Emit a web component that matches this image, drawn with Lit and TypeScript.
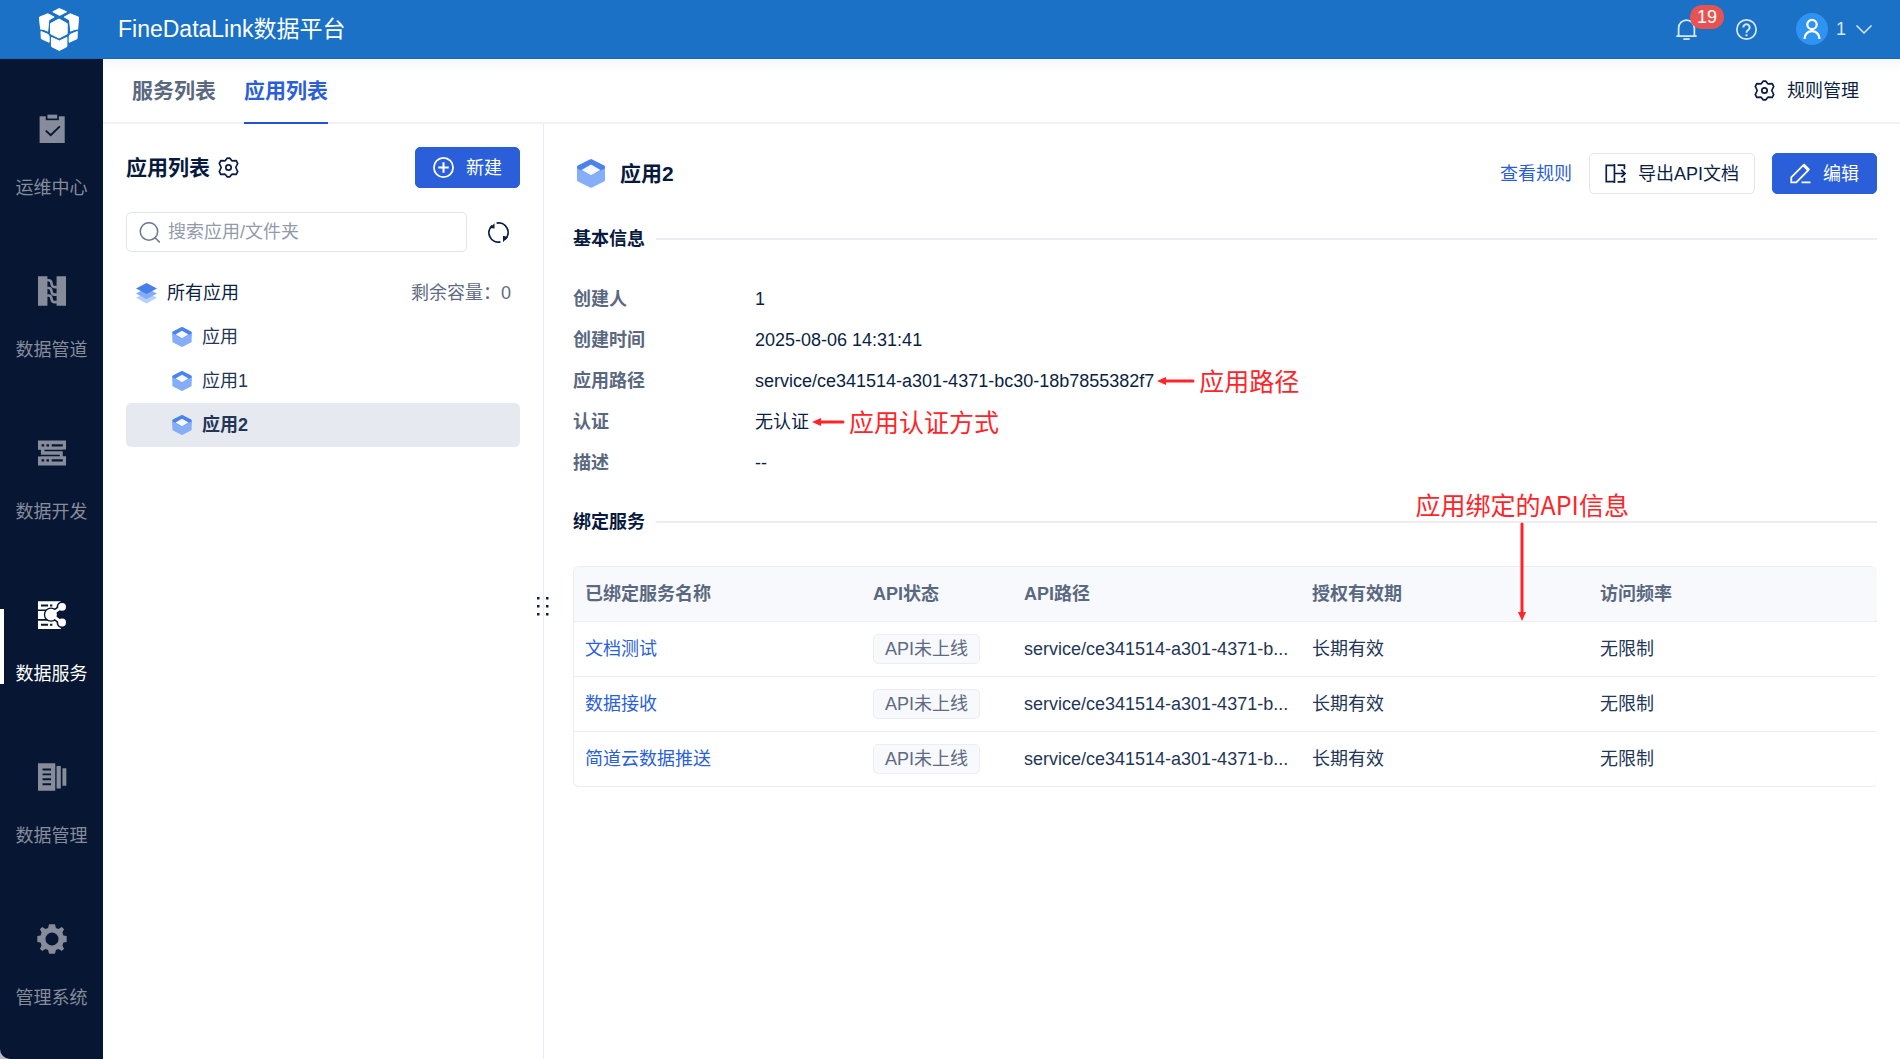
import { LitElement, html, css, svg } from "lit";
import { customElement, state } from "lit/decorators.js";
import { classMap } from "lit/directives/class-map.js";

const NAVY = "#071633";

const navIcons = {
  ops: svg`<svg class="nav-icon" viewBox="108 343 92 92"><path d="M116 350h77v82h-77z"/><path d="M135 340h40v22h-40z" fill=${NAVY}/><path d="M140 345h30v12h-30z"/><path d="M135 394l15 14 28-27" fill="none" stroke=${NAVY} stroke-width="6"/></svg>`,
  pipe: svg`<svg class="nav-icon" viewBox="108 169 92 92"><path d="M111 170h29v90h-29zM168 170h29v90h-29z"/><g fill="none" stroke="currentColor" stroke-width="8"><path d="M139 182h5c8 0 8 6 9 12s3 9 9 9h7"/><path d="M139 206h5c8 0 8 6 9 12s3 8 9 8h7"/><path d="M139 229h5c8 0 8 6 9 12s3 8 9 8h7"/></g></svg>`,
  dev: svg`<svg class="nav-icon" viewBox="108 653 92 92"><path d="M111 661h86v28h-86zM111 709h86v28h-86zM120 686h67v26h-67z"/><g fill=${NAVY}><path d="M131 689h66v5h-66zM111 704h67v5h-67z"/><path d="M122 672h8v7h-8zM137 672h8v7h-8zM153 672h34v7h-34zM122 718h8v7h-8zM137 718h8v7h-8zM153 718h34v7h-34z"/></g></svg>`,
  service: svg`<svg class="nav-icon" viewBox="108 59 92 92"><path d="M111 63h70v25h-70zM111 93h26v24h-26zM111 123h70v25h-70z"/><path fill=${NAVY} d="M120 73h22v6h-22zM148 73h7v6h-7zM120 132h22v6h-22zM148 132h7v6h-7z"/><g fill=${NAVY} stroke=${NAVY} stroke-width="10"><circle cx="151" cy="104" r="17"/><circle cx="185" cy="80" r="12"/><circle cx="185" cy="128" r="12"/><path d="M151 104l34-24M151 104l34 24" stroke-width="18"/></g><circle cx="151" cy="104" r="18"/><circle cx="185" cy="80" r="12"/><circle cx="185" cy="128" r="12"/><path d="M151 104l34-24M151 104l34 24" stroke="currentColor" stroke-width="9"/></svg>`,
  manage: svg`<svg class="nav-icon" viewBox="108 543 92 92"><path d="M111 547h53v84h-53zM168 555h13v69h-13zM186 562h12v54h-12z"/><path d="M125 566h26M125 581h26M125 596h26M125 611h26" stroke=${NAVY} stroke-width="6"/></svg>`,
  system: svg`<svg class="nav-icon" viewBox="-46 -46 92 92"><path fill-rule="evenodd" d="M-9-45H9L12-34 20-31 30-37 37-30 32-20 35-11 45-9V9L35 11 32 20 37 30 30 37 20 31 12 34 9 45H-9L-12 34-20 31-30 37-37 30-32 20-35 11-45 9V-9L-35-11-32-20-37-30-30-37-20-31-12-34ZM0-20A20 20 0 1 0 0 20 20 20 0 1 0 0-20Z"/></svg>`,
};

const logo = svg`<svg class="logo" viewBox="113 20 128 136" fill="#fff" stroke="#fff" stroke-width="3" stroke-linejoin="round"><path d="M158 34l20-10 22 10-21 11z"/><path d="M118 50l25-10 19 10-16 9-3 27-22 1z"/><path d="M236 50l-25-10-18 10 16 9 3 27 22 1z"/><path d="M118 51l3 33 22 9V62z"/><path d="M236 51l-3 33-21 9V62z"/><path d="M122 94l22 9 3 6v18l-24-11z"/><path d="M233 94l-22 9-3 6v18l24-11z"/><path d="M177 56l25 14v31l-25 13-26-13V70z"/><path d="M154 112l24 11 23-11v28l-23 12-24-12z"/></svg>`;

const gear = svg`<svg class="icon" viewBox="0.300 0.200 19.400 19.600" fill="none" stroke="currentColor" stroke-width="1.600" stroke-linejoin="round"><path d="M8.900 1.200h2.200L13.400 3.900l3.700-.4 1.500 2.700L16.800 10l1.800 3.800-1.500 2.700-3.700-.4-2.300 2.700H8.900L6.600 16.100l-3.700.4-1.500-2.700L3.200 10 1.400 6.200l1.500-2.700 3.700.4z"/><circle cx="10" cy="10" r="2.500"/></svg>`;
const plus = svg`<svg class="icon" viewBox="0 0 20 20" fill="none" stroke="currentColor" stroke-width="1.700"><circle cx="10" cy="10" r="9.100"/><path d="M10 5v10M5 10h10" stroke-width="2"/></svg>`;
const search = svg`<svg class="icon" viewBox="0 0 20 20" fill="none" stroke="currentColor" stroke-width="1.500"><circle cx="9.500" cy="9" r="8.300"/><path d="M15.300 15l4.500 4.500"/></svg>`;
const refresh = svg`<svg class="icon" viewBox="0 0 20 20" fill="none" stroke="currentColor" stroke-width="1.700"><path d="M11.800 18.900A9 9 0 0 1 4 3.300"/><path d="M8.200 1.100A9 9 0 0 1 16 16.700"/><path d="M1.800 5.800L6.200 1.200v5zM14.300 13v6.200l4.500-5z" fill="currentColor" stroke="none"/></svg>`;
const layers = svg`<svg class="icon" viewBox="0 0 20 20"><path d="M10 9l10 5-10 5.500L0 14z" fill="#b7d0fb"/><path d="M10 5l10 5-10 5.500L0 10z" fill="#85adf7"/><path d="M10 0l10 5.200-10 5.300L0 5.200z" fill="#4880ea"/></svg>`;
const cube = svg`<svg class="cube" viewBox="0 0 28 29"><path d="M1 6.500L13 .4q1-.5 2 0l12 6.100q1 .5 1 1.500v13q0 1-1 1.500L15 28.600q-1 .5-2 0L1 22.500q-1-.5-1-1.500V8q0-1 1-1.500z" fill="#86adf7"/><path d="M1 6.500L13 .4q1-.5 2 0l12 6.100q1 .5 1 1.500v1.500l-14 7-14-7V8q0-1 1-1.500z" fill="#4b82ec"/><path d="M0 9.500l14 7 14-7V14H0z" fill="#86adf7"/><path d="M4.500 11L14 5.600 23.500 11 14 16.300z" fill="#f5f9ff"/></svg>`;
const exportIcon = svg`<svg class="icon" viewBox="0 0 20 20" fill="none" stroke="currentColor" stroke-width="1.600"><path d="M9 2.200H1.200v15.600H9zM9 1v18"/><path d="M12 2h6.500v4M12 18h6.500v-4M9 10h9.500M15.500 6.500L19 10l-3.500 3.500"/></svg>`;
const pencil = svg`<svg class="icon" viewBox="0 0 20 20" fill="none" stroke="currentColor" stroke-width="1.700"><path d="M1.200 18.500v-4.800L12.500 2.300l4.700 4.800L6 18.500zM13 1l5.500 5.500M11 18.500h8.500"/></svg>`;
const bell = svg`<svg class="icon" viewBox="0 0 20 20" fill="none" stroke="currentColor" stroke-width="1.700"><path d="M.3 16.300h19.400M2.500 16V8.500a7.500 7.500 0 0 1 15 0V16"/><path d="M7 19.100h6"/></svg>`;
const help = svg`<svg class="icon" viewBox="0 0 20 20" fill="none" stroke="currentColor" stroke-width="1.600"><circle cx="10" cy="10" r="9.200"/><path d="M7 8a3 3 0 1 1 4.600 2.500Q10 11.500 10 13M10 14.500v2" stroke-width="1.900"/></svg>`;
const avatar = svg`<svg class="avatar" viewBox="0 0 32 32" fill="none" stroke="#fff" stroke-width="2.200"><circle cx="16" cy="16" r="16" fill="#2f93f3" stroke="none"/><circle cx="16" cy="11.500" r="4.700"/><path d="M8.500 26c0-10.500 15-10.500 15 0"/></svg>`;
const chevron = svg`<svg class="chevron" viewBox="0 0 16 9" fill="none" stroke="currentColor" stroke-width="1.500"><path d="M.5.5L8 8l7.500-7.500"/></svg>`;
const grip = svg`<svg viewBox="0 0 12 20" fill="currentColor"><path d="M0 0h2.500v2.500H0zM9 0h2.500v2.500H9zM0 8h2.500v2.500H0zM9 8h2.500v2.500H9zM0 16h2.500v2.500H0zM9 16h2.500v2.500H9z"/></svg>`;

const nav: { key: keyof typeof navIcons; label: string }[] = [
  { key: "ops", label: "运维中心" },
  { key: "pipe", label: "数据管道" },
  { key: "dev", label: "数据开发" },
  { key: "service", label: "数据服务" },
  { key: "manage", label: "数据管理" },
  { key: "system", label: "管理系统" },
];

const leftArrow = (length: number) =>
  svg`<svg class="arrow" width=${length} height="10" viewBox="0 0 ${length} 10"><path d="M0 5L9 1v8z" fill="#ff2429"/><path d="M8 5H${length - 2}" stroke="#ff2429" stroke-width="3" stroke-linecap="round"/></svg>`;

const services = ["文档测试", "数据接收", "简道云数据推送"];
const servicePath = "service/ce341514-a301-4371-bc30-18b7855382f7";
const shortPath = `${servicePath.slice(0, 28)}...`;

@customElement("app-root")
export class AppRoot extends LitElement {
  @state() private selected = "应用2";

  static styles = css`
    :host {
      display: flex;
      flex-direction: column;
      min-height: 100vh;
      background: #fff;
      color: #0b1f43;
      font: 18px/24px "Liberation Sans", "Noto Sans CJK SC", sans-serif;
    }
    * { box-sizing: border-box; }
    button, input { font: inherit; }
    button { border: 0; background: none; padding: 0; color: inherit; cursor: pointer; }
    a { color: #2b5fd9; text-decoration: none; }
    h1, h2, h3, dl, dd { margin: 0; padding: 0; font-size: 21px; }
    svg { display: block; flex: none; }
    .icon { width: 21px; height: 21px; }

    .topbar {
      display: flex;
      align-items: center;
      height: 59px;
      padding: 0 28px 0 38px;
      background: #1a71c6;
      border-bottom: 1px solid #1667b9;
      color: #fff;
    }
    .logo { width: 42px; height: 45px; }
    .product { margin-left: 38px; font-size: 23px; line-height: 32px; font-weight: 400; }
    .account { display: flex; align-items: center; margin-left: auto; color: #d9e8f7; }
    .bell { position: relative; margin-right: 39px; }
    .help { margin-right: 39px; }
    .badge {
      position: absolute;
      left: 14px;
      top: -14px;
      min-width: 34px;
      border-radius: 12px;
      background: #e75252;
      color: #fff;
      text-align: center;
    }
    .user { display: flex; align-items: center; gap: 8px; }
    .avatar { width: 32px; height: 32px; }
    .chevron { width: 16px; height: 9px; margin-left: 2px; }

    .body { display: flex; flex: 1; background: #b9bcc4; }
    .sidebar {
      display: flex;
      flex-direction: column;
      width: 103px;
      flex: none;
      padding-top: 21px;
      background: #071633;
      border-bottom-left-radius: 10px;
    }
    .nav-item {
      position: relative;
      display: flex;
      flex-direction: column;
      align-items: center;
      gap: 32px;
      height: 162px;
      padding-top: 34px;
      color: #868c9a;
    }
    .nav-item.active { color: #fff; }
    .nav-item.active::before {
      content: "";
      position: absolute;
      left: 0;
      top: 43px;
      width: 4px;
      height: 75px;
      background: #fff;
    }
    .nav-icon { width: 30px; height: 30px; fill: currentColor; }

    .page { display: flex; flex-direction: column; flex: 1; min-width: 0; background: #fff; }
    .tabs {
      display: flex;
      gap: 28px;
      height: 65px;
      padding: 0 41px 0 29px;
      border-bottom: 2px solid #f1f2f5;
      background: linear-gradient(#f6f7f9, #fff 14px);
    }
    .tab {
      height: 65px;
      border-bottom: 2px solid transparent;
      color: #5a6880;
      font-size: 21px;
      font-weight: 700;
    }
    .tab.active { color: #2b5fd9; border-color: #2153d4; }
    .rules { display: flex; align-items: center; gap: 12px; margin-left: auto; }

    .split { display: flex; flex: 1; }
    .list {
      position: relative;
      width: 441px;
      flex: none;
      padding: 23px 23px 0 23px;
      border-right: 1px solid #e9ebf0;
    }
    .list-head { display: flex; align-items: center; gap: 8px; }
    .list-head h2, .title { color: #071a3d; }
    .btn {
      display: flex;
      align-items: center;
      justify-content: center;
      gap: 12px;
      height: 41px;
      padding: 0 15px;
      border: 1px solid #e3e6ee;
      border-radius: 5px;
    }
    .btn.primary { padding: 0 17px; background: #2b5fd9; border-color: #2b5fd9; color: #fff; }
    .push { margin-left: auto; }
    .search-row { display: flex; align-items: center; gap: 21px; margin-top: 24px; padding-right: 11px; }
    .search {
      display: flex;
      align-items: center;
      gap: 8px;
      flex: 1;
      min-width: 0;
      height: 40px;
      padding: 0 12px;
      border: 1px solid #e0e4ec;
      border-radius: 5px;
      color: #6f7b90;
    }
    .search input { flex: 1; min-width: 0; border: 0; outline: 0; padding: 0; background: none; color: #0b1f43; }
    .search input::placeholder { color: #929bab; opacity: 1; }
    .tree { margin-top: 19px; }
    .node {
      display: flex;
      align-items: center;
      gap: 10px;
      width: 100%;
      height: 44px;
      padding: 0 9px 0 10px;
      border-radius: 5px;
      text-align: left;
    }
    .node.child { padding-left: 46px; color: #233656; }
    .node.selected { background: #e6e9f0; font-weight: 700; }
    .node .cube { width: 20px; height: 20px; }
    .capacity { margin-left: auto; color: #5e6b82; }
    .grip {
      position: absolute;
      right: -6px;
      top: 473px;
      width: 12px;
      height: 20px;
      color: #0b1f43;
      cursor: col-resize;
    }

    .detail { flex: 1; min-width: 0; padding: 29px 23px 40px 29px; }
    .detail-head { display: flex; align-items: center; gap: 17px; }
    .detail-head .cube { width: 28px; height: 29px; margin-left: 4px; margin-right: -2px; }
    .section { position: relative; display: flex; align-items: center; gap: 11px; margin-top: 33px; }
    .fields + .section { margin-top: 27px; }
    .section h3 { font-size: 18px; line-height: 24px; color: #071a3d; }
    .section::after { content: ""; flex: 1; height: 2px; background: #ebedf3; }
    .fields { margin-top: 27px; font-size: 18px; }
    .field { display: flex; align-items: center; height: 41px; }
    .field dt { width: 182px; color: #5a6880; font-weight: 700; }
    .field dd { display: flex; align-items: center; font-size: 18px; white-space: nowrap; }
    .note { padding-bottom: 2px; color: #ff2429; font-size: 25px; line-height: 32px; font-family: "Noto Sans CJK SC", sans-serif; }
    .arrow { margin: 0 4px 0 3px; }
    .callout {
      position: absolute;
      left: 65%;
      top: -22px;
      margin-left: -5px;
      display: flex;
      flex-direction: column;
      align-items: center;
      white-space: nowrap;
    }

    .table-wrap { margin-top: 32px; border: 1px solid #ebedf3; border-right: 0; border-radius: 6px; overflow: hidden; }
    table { width: 100%; table-layout: fixed; border-collapse: collapse; }
    .col-status { width: 151px; }
    th, td { padding: 0 0 0 11px; text-align: left; white-space: nowrap; }
    th { height: 54px; background: #f7f9fd; color: #5a6880; font-weight: 700; }
    td { height: 55px; border-top: 1px solid #ebedf3; color: #233656; }
    .tag {
      display: inline-block;
      padding: 2px 11px;
      border: 1px solid #ebedf3;
      border-radius: 5px;
      background: #f7f9fd;
      color: #5e6b82;
    }
  `;

  render() {
    return html`
      <header class="topbar">
        ${logo}
        <h1 class="product">FineDataLink数据平台</h1>
        <div class="account">
          <button class="bell" aria-label="消息">${bell}<span class="badge">19</span></button>
          <button class="help" aria-label="帮助">${help}</button>
          <button class="user">${avatar}<span>1</span>${chevron}</button>
        </div>
      </header>
      <div class="body">
        <nav class="sidebar">
          ${nav.map(
            (n) => html`<a href="#${n.key}" class=${classMap({ "nav-item": true, active: n.key === "service" })}>
              ${navIcons[n.key]}<span>${n.label}</span>
            </a>`
          )}
        </nav>
        <div class="page">
          <div class="tabs">
            <button class="tab">服务列表</button>
            <button class="tab active">应用列表</button>
            <button class="rules">${gear}<span>规则管理</span></button>
          </div>
          <div class="split">${this.renderList()}${this.renderDetail()}</div>
        </div>
      </div>
    `;
  }

  private renderList() {
    return html`
      <aside class="list">
        <div class="list-head">
          <h2>应用列表</h2>
          <button aria-label="设置">${gear}</button>
          <button class="btn primary push">${plus}<span>新建</span></button>
        </div>
        <div class="search-row">
          <label class="search">${search}<input type="text" aria-label="搜索" placeholder="搜索应用/文件夹" /></label>
          <button aria-label="刷新">${refresh}</button>
        </div>
        <div class="tree">
          <button class="node">${layers}<span>所有应用</span><span class="capacity">剩余容量：0</span></button>
          ${["应用", "应用1", "应用2"].map(
            (name) => html`<button
              class=${classMap({ node: true, child: true, selected: name === this.selected })}
              @click=${() => (this.selected = name)}
            >${cube}<span>${name}</span></button>`
          )}
        </div>
        <div class="grip">${grip}</div>
      </aside>
    `;
  }

  private renderDetail() {
    return html`
      <main class="detail">
        <div class="detail-head">
          ${cube}
          <h2 class="title">应用2</h2>
          <a class="push" href="#rules">查看规则</a>
          <button class="btn">${exportIcon}<span>导出API文档</span></button>
          <button class="btn primary">${pencil}<span>编辑</span></button>
        </div>
        <div class="section"><h3>基本信息</h3></div>
        <dl class="fields">
          <div class="field"><dt>创建人</dt><dd>1</dd></div>
          <div class="field"><dt>创建时间</dt><dd>2025-08-06 14:31:41</dd></div>
          <div class="field"><dt>应用路径</dt><dd>${servicePath}${leftArrow(38)}<span class="note">应用路径</span></dd></div>
          <div class="field"><dt>认证</dt><dd>无认证${leftArrow(33)}<span class="note">应用认证方式</span></dd></div>
          <div class="field"><dt>描述</dt><dd>--</dd></div>
        </dl>
        <div class="section">
          <h3>绑定服务</h3>
          <div class="callout">
            <span class="note">应用绑定的API信息</span>
            <svg width="10" height="99" viewBox="0 0 10 99"><path d="M5 2v90" stroke="#ff2429" stroke-width="3" stroke-linecap="round"/><path d="M1 90h8L5 99z" fill="#ff2429"/></svg>
          </div>
        </div>
        <div class="table-wrap">
          <table>
            <colgroup><col /><col class="col-status" /><col /><col /><col /></colgroup>
            <thead>
              <tr><th>已绑定服务名称</th><th>API状态</th><th>API路径</th><th>授权有效期</th><th>访问频率</th></tr>
            </thead>
            <tbody>
              ${services.map(
                (name) => html`<tr>
                  <td><a href="#service">${name}</a></td>
                  <td><span class="tag">API未上线</span></td>
                  <td>${shortPath}</td>
                  <td>长期有效</td>
                  <td>无限制</td>
                </tr>`
              )}
            </tbody>
          </table>
        </div>
      </main>
    `;
  }
}
